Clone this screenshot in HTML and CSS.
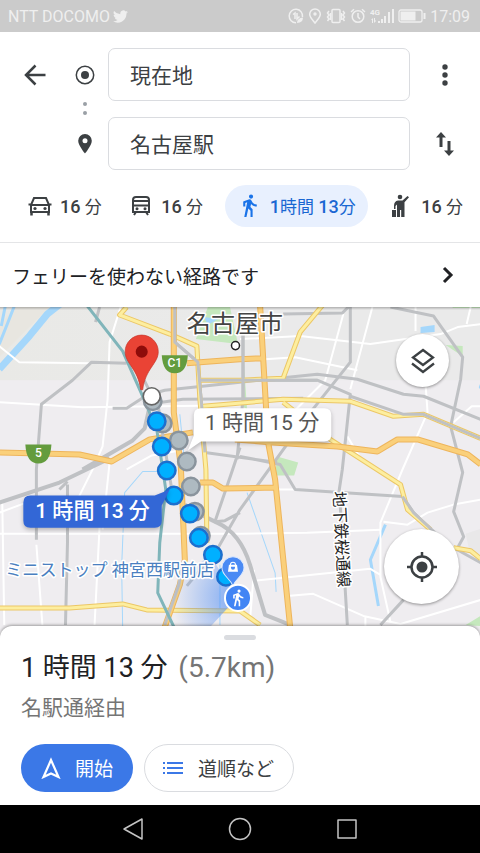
FILE: index.html
```html
<!DOCTYPE html>
<html lang="ja">
<head>
<meta charset="utf-8">
<meta name="viewport" content="width=device-width, initial-scale=1">
<title>現在地 → 名古屋駅</title>
<link rel="stylesheet" href="styles.css">
</head>
<body>
<div class="status">
  <span>NTT DOCOMO</span>
  <svg class="bird" width="15" height="15" viewBox="0 0 24 24" fill="currentColor"><path d="M24 4.6a10 10 0 0 1-2.800.8 5 5 0 0 0 2.100-2.700 10 10 0 0 1-3.100 1.200 4.900 4.900 0 0 0-8.400 4.500A14 14 0 0 1 1.700 3.200a4.900 4.900 0 0 0 1.500 6.500 5 5 0 0 1-2.200-.6c0 2.300 1.600 4.400 3.900 4.900a5 5 0 0 1-2.200.1 4.900 4.900 0 0 0 4.600 3.400A9.900 9.900 0 0 1 0 19.500 14 14 0 0 0 21.500 7.100 10 10 0 0 0 24 4.600z"/></svg>
  <div class="status-icons">
    <svg width="16" height="16" viewBox="0 0 16 16" fill="none" stroke="currentColor" stroke-width="1.500"><path d="M14.500 9A6.700 6.700 0 1 0 8 14.700"/><path d="M5 6.500l2-1.500v6M9 5v6l2.500-2.500"/><path d="M9 15q0-5 6-5.500 0 5-6 5.500z" fill="currentColor" stroke="none"/></svg>
    <svg width="14" height="16" viewBox="0 0 14 16" fill="none" stroke="currentColor" stroke-width="1.500"><path d="M7 15C4 11 1.700 9 1.700 6.200a5.300 5.300 0 0 1 10.600 0C12.300 9 10 11 7 15z"/><circle cx="7" cy="6" r="1.700" fill="currentColor" stroke="none"/></svg>
    <svg width="20" height="16" viewBox="0 0 20 16" fill="none" stroke="currentColor" stroke-width="1.500"><rect x="6" y="1.500" width="8" height="13" rx="1"/><path d="M3 3L1.500 5 3 7 1.500 9 3 11l-1.500 2M4.500 5v7M17 3l1.500 2L17 7l1.500 2-1.500 2 1.500 2M15.500 5v7"/></svg>
    <svg width="16" height="16" viewBox="0 0 16 16" fill="none" stroke="currentColor" stroke-width="1.500"><circle cx="8" cy="8.500" r="5.800"/><path d="M8 5v4l2 2M1 4l3-2.700M15 4l-3-2.700"/></svg>
    <svg class="signal" width="24" height="16" viewBox="0 0 24 16" fill="currentColor"><text class="net" x="0" y="7">4G</text><path d="M1 12l2-2v5H2v-3zM4 10h1v3l1-1v1l-2 2zM8 13h2v2H8zM11 11h2v4h-2zM14 8h2v7h-2zM18 4h2v11h-2zM22 1h2v14h-2z"/></svg>
    <svg class="battery" width="28" height="14" viewBox="0 0 28 14"><rect x="1" y="1" width="23" height="12" rx="2" fill="none" stroke="currentColor" stroke-width="1.300"/><rect x="2.500" y="2.500" width="15" height="9" fill="currentColor"/><rect x="25.500" y="4" width="2" height="6" fill="currentColor"/></svg>
    <span>17:09</span>
  </div>
</div>

<header class="search">
  <div class="fields">
    <button class="icon-btn" aria-label="戻る"><svg width="24" height="24" viewBox="0 0 24 24" fill="none" stroke="currentColor" stroke-width="2.500"><path d="M22.500 12H3M12.500 2.500L3 12l9.500 9.500"/></svg></button>
    <svg class="mark" width="20" height="20" viewBox="0 0 20 20"><circle cx="10" cy="10" r="8.700" fill="none" stroke="currentColor" stroke-width="1.500"/><circle cx="10" cy="10" r="4" fill="currentColor"/></svg>
    <input type="text" aria-label="出発地" value="現在地">
    <button class="icon-btn" aria-label="メニュー"><svg width="24" height="24" viewBox="0 0 24 24" fill="currentColor"><circle cx="12" cy="4" r="2.700"/><circle cx="12" cy="12" r="2.700"/><circle cx="12" cy="20" r="2.700"/></svg></button>
    <svg class="link-dots" width="6" height="16" viewBox="0 0 6 16" fill="#9aa0a6"><circle cx="3" cy="3" r="2"/><circle cx="3" cy="12" r="2"/></svg>
    <svg class="mark pin" width="14" height="20" viewBox="0 0 14 20"><path fill="currentColor" fill-rule="evenodd" d="M7 0a6.800 6.800 0 0 0-6.800 6.800C.2 11.500 7 19.500 7 19.500s6.800-8 6.800-12.700A6.800 6.800 0 0 0 7 0zm0 4.300a2.500 2.500 0 1 1 0 5 2.500 2.500 0 0 1 0-5z"/></svg>
    <input class="dest" type="text" aria-label="目的地" value="名古屋駅">
    <button class="icon-btn swap" aria-label="入れ替え"><svg width="24" height="26" viewBox="0 0 24 26" fill="currentColor"><path d="M8 1l5 5.500H9.500V16h-3V6.500H3zM16 25l-5-5.500h3.500V10h3v9.500H21z"/></svg></button>
  </div>
  <nav class="modes">
    <button class="mode"><svg width="24" height="20" viewBox="0 0 24 20" fill="none" stroke="currentColor" stroke-width="2"><path d="M3 17V9L6 2h12l3 7v8M3 9h18M3 16h18M.5 8.500H4M20 8.500h3.500"/><path stroke-width="2.500" d="M3.500 16v3.500M20.500 16v3.500"/><circle cx="7" cy="12.500" r="1.600" fill="currentColor" stroke="none"/><circle cx="17" cy="12.500" r="1.600" fill="currentColor" stroke="none"/></svg><span><b>16</b> 分</span></button>
    <button class="mode"><svg width="24" height="20" viewBox="-2 0 24 20" fill="none" stroke="currentColor" stroke-width="2"><path d="M2 16V4q0-3 3-3h10q3 0 3 3v12zM2 9.500h16M3 5h14M5 16l-2 3M15 16l2 3"/><circle cx="6" cy="12.700" r="1.500" fill="currentColor" stroke="none"/><circle cx="14" cy="12.700" r="1.500" fill="currentColor" stroke="none"/></svg><span><b>16</b> 分</span></button>
    <button class="mode active" aria-pressed="true"><svg width="16" height="24" viewBox="5 1 15 23" fill="#1a73e8"><path d="M13.500 5.500a2 2 0 1 0 0-4 2 2 0 0 0 0 4zM9.800 8.900L7 23h2.100l1.800-8 2.100 2v6h2v-7.500l-2.100-2 .6-3c1.300 1.500 3.300 2.500 5.500 2.500v-2c-1.900 0-3.500-1-4.300-2.400l-1-1.600a2 2 0 0 0-2.500-.8L6 8.300V13h2V9.600z"/></svg><span><b>1</b>時間 <b>13</b>分</span></button>
    <button class="mode"><svg width="24" height="24" viewBox="-3 0 24 24" fill="currentColor"><circle cx="8" cy="3" r="2.300"/><path d="M15.500 2l1.500 1.200-4.500 5V23H9.200v-7H8v7H5V10.500L3.500 12v3H2v-3q0-5 4-5.500h4.500zM0 16h4v7H0z"/></svg><span><b>16</b> 分</span></button>
  </nav>
</header>

<button class="notice"><span>フェリーを使わない経路です</span><svg width="12" height="18" viewBox="0 0 12 18" fill="none" stroke="currentColor" stroke-width="3"><path d="M2 2l7 7-7 7"/></svg></button>

<main class="map">
  <svg class="canvas" viewBox="0 308 480 330" preserveAspectRatio="xMidYMid slice" role="img" aria-label="名古屋市の地図">
    <defs>
      <radialGradient id="beam" gradientUnits="userSpaceOnUse" cx="237" cy="598" r="65"><stop offset="0" stop-color="#4a8af4" stop-opacity=".7"/><stop offset="1" stop-color="#4a8af4" stop-opacity="0"/></radialGradient>
      <linearGradient id="land" x1="0" x2="1"><stop offset="0" stop-color="#e9e9e6"/><stop offset=".5" stop-color="#eaeaea"/></linearGradient>
    </defs>
    <rect y="300" width="480" height="345" fill="#efedf0"/>
    <rect y="300" width="480" height="81" fill="url(#land)"/>
    <path fill="#e8e6e0" d="M15 308h35L0 358v-30z"/>
    <g fill="#c5e8bd"><path d="M208 308h22l8 37-42-5zM277 457l21 6-4 13h-19zM445 346l17 1v10zM452 306h30v3h-30zM465 625l15-9v10z"/><path d="M244 365l3 45-5-3z"/></g>
    <path fill="#a5d7fb" d="M420 328l14-2v7l-14 1zM204 318l14 2-10 6zM478 388l2-5v8z"/>
    <path fill="#e9e8e9" d="M465 534l15-5v26l-12-7z"/>
    <g class="road water"><path class="wide" d="M62 304L48 315 30 337 0 370"/><path class="mid" d="M15 307L8 325 0 345M6 307l-4 20"/><path class="thin" d="M160 472h-17l-18 21-3 74 1 60M247 493l28 80 1 19M220 565v60M180 415l4 40"/><path class="mid" d="M385 525l-15 35 8 46"/></g>
    <g class="road white">
      <path d="M0 347l20 16 70 1M121 308l-11 35-2 57-5 47-10 23-15 30M0 403l83 5 157-2M0 534h240l67-1 73-3M0 513l27-10M3 503l2 122M37 545l6 80M100 527l-5 98M110 463l-7 67M127 470l25-14 28-5"/>
      <path d="M240 340l60-3 70 8 70-10 17-7 23-3M343 315l-18 66-30 30M372 308l-22 82M265 360l30-2 62 13M415 308v24M470 308l-4 17M425 385l2 28-25 57-22 53v54l10 45M453 423l18-16h9M383 522l24 3 20-12 26-8 27-5M253 581l117-12 10 6M290 596l23-2 50 22 37 8 80-24M240 490l55 0M250 620l4-50M347 437l12 20M365 616v10"/>
    </g>
    <g class="road rail">
      <path class="wide2" d="M83 470l50-29 12-12 5-22M0 503l60-20 50-24"/>
      <path class="wide2" d="M185 505l20 12 12 6q23 10 33 42l15 50 25 10"/>
      <path d="M37 540l0-70 5-65 31-24 19-18 35 1M60 490l8-8M68 485v58l-2 82M113 409h14l20-13 18-5 75-8 77-8 40 5 46 15 20 2 57 23M148 405l35-5 120-1M100 308l-4 15"/>
      <path d="M175 308v35l23 20 5 57 2 33 72 10M243 320v80l-6 60M283 315l59-1 8-8v57l-43 54-67 93-23 40-30 36M200 381h117l33 14-8 75-3 20 8 135M240 457l40 8 15 25 107 7 11 16 17 17M390 308l43 9 29 41-2 22-10 47 12 46-9 39 10 25-6 11M453 548l27 15M403 600l-23 25M240 513l-15 8-10 1 17-50 8-24"/>
    </g>
    <g class="edge"><path d="M127 308l-7 8 50 19 27 12 3 53 6 70 1 73M200 381h40l43-2 17-46 25-30M203 407l80-7 67 2 43 15 30-2 57 24M283 403l47 37 70 45 7 25 23 20M453 548l17 3 10 8M0 608h70l53-4 24 6 93 1 20 14"/></g>
    <g class="yellow"><path d="M127 308l-7 8 50 19 27 12 3 53 6 70 1 73M200 381h40l43-2 17-46 25-30M203 407l80-7 67 2 43 15 30-2 57 24M283 403l47 37 70 45 7 25 23 20M453 548l17 3 10 8M0 608h70l53-4 24 6 93 1 20 14"/></g>
    <g class="orange-edge"><path d="M174 306v107l7 54 4 93-5 25-15 42M260 306l8 137 7 37 15 147M0 453l80 2 32 7 38-22 43-7M187 364l53-4 23-1M200 483h13l10 6 52-1M235 440l37 3 65 4 40 5 20-12h20l50 15 13 10"/></g>
    <g class="orange"><path d="M174 306v107l7 54 4 93-5 25-15 42M260 306l8 137 7 37 15 147M0 453l80 2 32 7 38-22 43-7M187 364l53-4 23-1M200 483h13l10 6 52-1M235 440l37 3 65 4 40 5 20-12h20l50 15 13 10"/></g>
    <path class="road rail" d="M183 562l-4 23-14 40M350 397l53 18h20l57 24M402 497l11 16 33 31M175 308v35l23 20 5 57 2 33M200 381h117M243 320v80"/>
    <path class="teal" d="M87 306l36 46 20 45 14 33 9 60-6 53-2 50 17 36"/>
    <path class="road rail" d="M139 370l20 40 8 50 5 30"/>
    <path fill="url(#beam)" d="M237 598l-27-43-60 50 20 33h30z"/>

    <g class="shield"><path d="M162 356h26q-1 18-13 18t-13-18zM26 445h26q-1 19-13 19t-13-19z" fill="#649c3e"/><text x="175" y="368">C1</text><text x="39" y="458">5</text></g>
    <text class="city" x="235" y="333">名古屋市</text>
    <circle cx="235.500" cy="346.500" r="4" fill="#fff" stroke="#222" stroke-width="1.500"/>
    <text class="line" transform="translate(333 492) rotate(87)">地下鉄桜通線</text>

    <g fill="#aebac1" stroke="#8a949d" stroke-width="2.500"><circle cx="153" cy="402" r="8.700"/><circle cx="163" cy="424" r="8.700"/><circle cx="179" cy="441" r="8.700"/><circle cx="187" cy="462" r="8.700"/><circle cx="191" cy="487" r="8.700"/><circle cx="195" cy="512" r="8.700"/><circle cx="201" cy="536" r="8.700"/></g>
    <g fill="#00b0ff" stroke="#1d6fcd" stroke-width="2.500"><circle cx="157" cy="422" r="8.700"/><circle cx="162" cy="447" r="8.700"/><circle cx="167" cy="471" r="8.700"/><circle cx="174" cy="496" r="8.700"/><circle cx="190" cy="514" r="8.700"/><circle cx="199" cy="538" r="8.700"/><circle cx="213" cy="555" r="8.700"/><circle cx="226" cy="577" r="8.700"/></g>
    <circle cx="152" cy="397" r="8.500" fill="#fff" stroke="#666" stroke-width="1.700"/>
    <path fill="#ea4335" stroke="#c5362b" stroke-width=".7" d="M142 336a16.500 16.500 0 0 0-16.500 16.500c0 12 13 17 15.500 38h2c2.500-21 15.500-26 15.500-38A16.500 16.500 0 0 0 142 336z"/>
    <circle cx="142" cy="352.500" r="6" fill="#8e0c0a"/>
    <text class="shop" x="6" y="576">ミニストップ 神宮西駅前店</text>
    <path fill="#4a8af4" stroke="#dce9fd" stroke-width="1" d="M233 557a11 11 0 0 0-11 11c0 8 8 10 11 18 3-8 11-10 11-18a11 11 0 0 0-11-11z"/>
    <path fill="#fff" fill-rule="evenodd" d="M229 565h1a3 3 0 0 1 6 0h1l1 7h-10zm2 0h4a2 2 0 0 0-4 0zm0 2v1a2 2 0 0 0 4 0v-1z"/>
    <circle cx="238" cy="598" r="13" fill="#4285f4" stroke="#fff" stroke-width="2"/>
    <path transform="translate(228.500 588.500) scale(.78)" fill="#fff" d="M13.500 5.500a2 2 0 1 0 0-4 2 2 0 0 0 0 4zM9.800 8.900L7 23h2.100l1.800-8 2.100 2v6h2v-7.500l-2.100-2 .6-3c1.300 1.500 3.300 2.500 5.500 2.500v-2c-1.900 0-3.500-1-4.300-2.400l-1-1.600a2 2 0 0 0-2.500-.8L6 8.300V13h2V9.600z"/>

    <path class="bubble" fill="#fff" d="M201 409h123q7 0 7 7v19q0 7-7 7H201l-13 9 6-15v-20q0-7 7-7z"/>
    <text class="time" x="262" y="431">1 時間 15 分</text>
    <path class="bubble" fill="#3367d6" d="M31 496h124l15-6-8 16v15q0 7-7 7H31q-7 0-7-7v-18q0-7 7-7z"/>
    <text class="time best" x="93" y="518">1 時間 13 分</text>
  </svg>
  <button class="round layers" aria-label="レイヤ"><svg width="26" height="26" viewBox="0 0 26 26" fill="none" stroke="currentColor" stroke-width="2.300"><path d="M13 2L23 9.500 13 17 3 9.500zM2 15.500l11 8.500 11-8.500"/></svg></button>
  <button class="round locate" aria-label="現在地を表示"><svg width="30" height="30" viewBox="0 0 30 30"><circle cx="15" cy="15" r="10.500" fill="none" stroke="currentColor" stroke-width="2.500"/><circle cx="15" cy="15" r="5.500" fill="currentColor"/><path stroke="currentColor" stroke-width="2.500" d="M15 0v5M15 25v5M0 15h5M25 15h5"/></svg></button>
</main>

<section class="sheet">
  <div class="handle"></div>
  <h1>1 時間 13 分 <span>(5.7km)</span></h1>
  <p>名駅通経由</p>
  <div class="actions">
    <button class="primary"><svg width="20" height="22" viewBox="0 0 20 22" fill="none" stroke="currentColor" stroke-width="2.200"><path d="M10 3L2.500 20 10 16.500l7.500 3.500z"/></svg>開始</button>
    <button class="outline"><svg width="22" height="16" viewBox="0 0 22 16" fill="none" stroke="#3b78e7" stroke-width="2"><path d="M5 3h16M5 8h16M5 13h16M1 3h2M1 8h2M1 13h2"/></svg>道順など</button>
  </div>
</section>

<footer class="sysnav">
  <button aria-label="戻る"><svg width="24" height="24" viewBox="0 0 24 24"><path d="M21 2v20L3 12z"/></svg></button>
  <button aria-label="ホーム"><svg width="24" height="24" viewBox="0 0 24 24"><circle cx="12" cy="12" r="10.500"/></svg></button>
  <button aria-label="履歴"><svg width="24" height="24" viewBox="0 0 24 24"><rect x="3" y="3" width="18" height="18"/></svg></button>
</footer>
</body>
</html>
```
FILE: styles.css
```css
* { box-sizing: border-box; }

body {
  margin: 0;
  min-height: 100vh;
  display: flex;
  flex-direction: column;
  background: #fff;
  color: #3c4043;
  font-family: Roboto, "Noto Sans CJK JP", sans-serif;
}

button {
  border: 0;
  padding: 0;
  background: none;
  color: inherit;
  font: inherit;
}

svg { flex: none; display: block; }

.status {
  display: flex;
  align-items: center;
  height: 32px;
  padding: 0 10px 0 8px;
  background: #cbcbcb;
  color: #efefef;
  font-size: 16px;
}

.bird { margin-left: 3px; }
.status-icons { margin-left: auto; display: flex; align-items: center; gap: 4px; }
.net { font-size: 8px; font-weight: 700; }

.search { border-bottom: 1px solid #e4e5e7; }

.fields {
  display: grid;
  grid-template-columns: 70px 30px 1fr 70px;
  grid-template-rows: 53px 16px 53px;
  align-items: center;
  justify-items: center;
  padding-top: 16px;
}

.fields input {
  grid-column: 3;
  justify-self: stretch;
  min-width: 0;
  height: 53px;
  margin-left: 8px;
  padding: 0 21px 1px;
  border: 1px solid #dadce0;
  border-radius: 7px;
  background: #fff;
  color: #3c4043;
  font: inherit;
  font-size: 21px;
}

.link-dots { grid-column: 2; grid-row: 2; }
.mark.pin { grid-column: 2; grid-row: 3; }
.fields .dest { grid-row: 3; }
.swap { grid-column: 4; grid-row: 3; }

.modes {
  display: flex;
  justify-content: space-between;
  align-items: center;
  padding: 15px 11px 15px 22px;
}

.mode {
  display: flex;
  align-items: center;
  gap: 8px;
  height: 42px;
  padding: 0 6px 1px;
  font-size: 17px;
  white-space: nowrap;
}
.mode b { font-size: 18px; font-weight: 500; }

.mode.active {
  gap: 12px;
  padding: 0 12px 1px 17px;
  border-radius: 21px;
  background: #e8f0fe;
  color: #1967d2;
}

.notice {
  display: flex;
  align-items: center;
  justify-content: space-between;
  height: 64px;
  padding: 0 26px 0 12px;
  color: #202124;
  font-size: 19px;
}

.map {
  position: relative;
  flex: 1;
  min-height: 240px;
  overflow: hidden;
}

.canvas { position: absolute; inset: 0; width: 100%; height: 100%; }
.map::after {
  content: "";
  position: absolute;
  inset: 0 0 auto;
  height: 3px;
  background: linear-gradient(rgba(0, 0, 0, .25), transparent);
}

.road { fill: none; stroke-linejoin: round; }
.water { stroke: #a5d7fb; }
.white { stroke: #fff; stroke-width: 2; }
.rail { stroke: #bfc1c4; stroke-width: 3; }
.wide { stroke-width: 7; }
.wide2 { stroke-width: 4; }
.mid { stroke-width: 3; }
.thin { stroke-width: 1; }
.edge, .yellow, .orange, .orange-edge, .teal { fill: none; stroke-linejoin: round; }
.edge { stroke: #ecc766; stroke-width: 5; }
.yellow { stroke: #fdee9f; stroke-width: 3; }
.orange-edge { stroke: #eeb55c; stroke-width: 6; }
.orange { stroke: #fad07b; stroke-width: 4; }
.teal { stroke: #80b5ba; stroke-width: 3; }

.map text { font-family: Roboto, "Noto Sans CJK JP", sans-serif; }
.shield text { fill: #fff; font-size: 12px; font-weight: 500; text-anchor: middle; }
.city, .line, .shop {
  paint-order: stroke;
  stroke: #fff;
  stroke-width: 3px;
  stroke-linejoin: round;
}
.city { font-size: 24px; fill: #444; text-anchor: middle; }
.line { font-size: 16px; fill: #222; }
.shop { font-size: 17px; fill: #4a7fc0; }
.time { font-size: 21px; fill: #555; text-anchor: middle; }
.time.best { fill: #fff; font-weight: 500; }
.bubble { filter: drop-shadow(0 2px 2px rgba(0, 0, 0, .25)); }

.round {
  position: absolute;
  display: grid;
  place-items: center;
  border-radius: 50%;
  background: #fff;
  box-shadow: 0 1px 3px rgba(0, 0, 0, .4);
}
.layers { top: 27px; right: 31px; width: 53px; height: 53px; }
.locate { bottom: 34px; right: 21px; width: 75px; height: 75px; }

.sheet {
  position: relative;
  margin-top: -12px;
  padding: 9px 21px 13px;
  border-radius: 12px 12px 0 0;
  background: #fff;
  box-shadow: 0 -1px 3px rgba(0, 0, 0, .35);
}

.handle {
  width: 32px;
  height: 5px;
  margin: 0 auto 8px;
  border-radius: 3px;
  background: #dadce0;
}

h1 {
  margin: 0;
  color: #202124;
  font-size: 27px;
  font-weight: 400;
  line-height: 40px;
}
h1 span { margin-left: 4px; color: #757575; font-size: 28px; }

.sheet p {
  margin: 4px 0 20px;
  color: #757575;
  font-size: 21px;
  line-height: 32px;
}

.actions { display: flex; gap: 11px; }
.actions button {
  display: flex;
  align-items: center;
  gap: 14px;
  height: 48px;
  padding: 0 20px 1px;
  border-radius: 24px;
  font-size: 19px;
}
.actions .primary { background: #3b78e7; color: #fff; }
.actions .outline { border: 1px solid #dadce0; padding: 0 19px 1px 17px; }

.sysnav {
  display: flex;
  justify-content: center;
  align-items: center;
  gap: 83px;
  height: 48px;
  background: #000;
}
.sysnav svg { fill: none; stroke: #c4c4c4; stroke-width: 1.500; stroke-linejoin: round; }
```
